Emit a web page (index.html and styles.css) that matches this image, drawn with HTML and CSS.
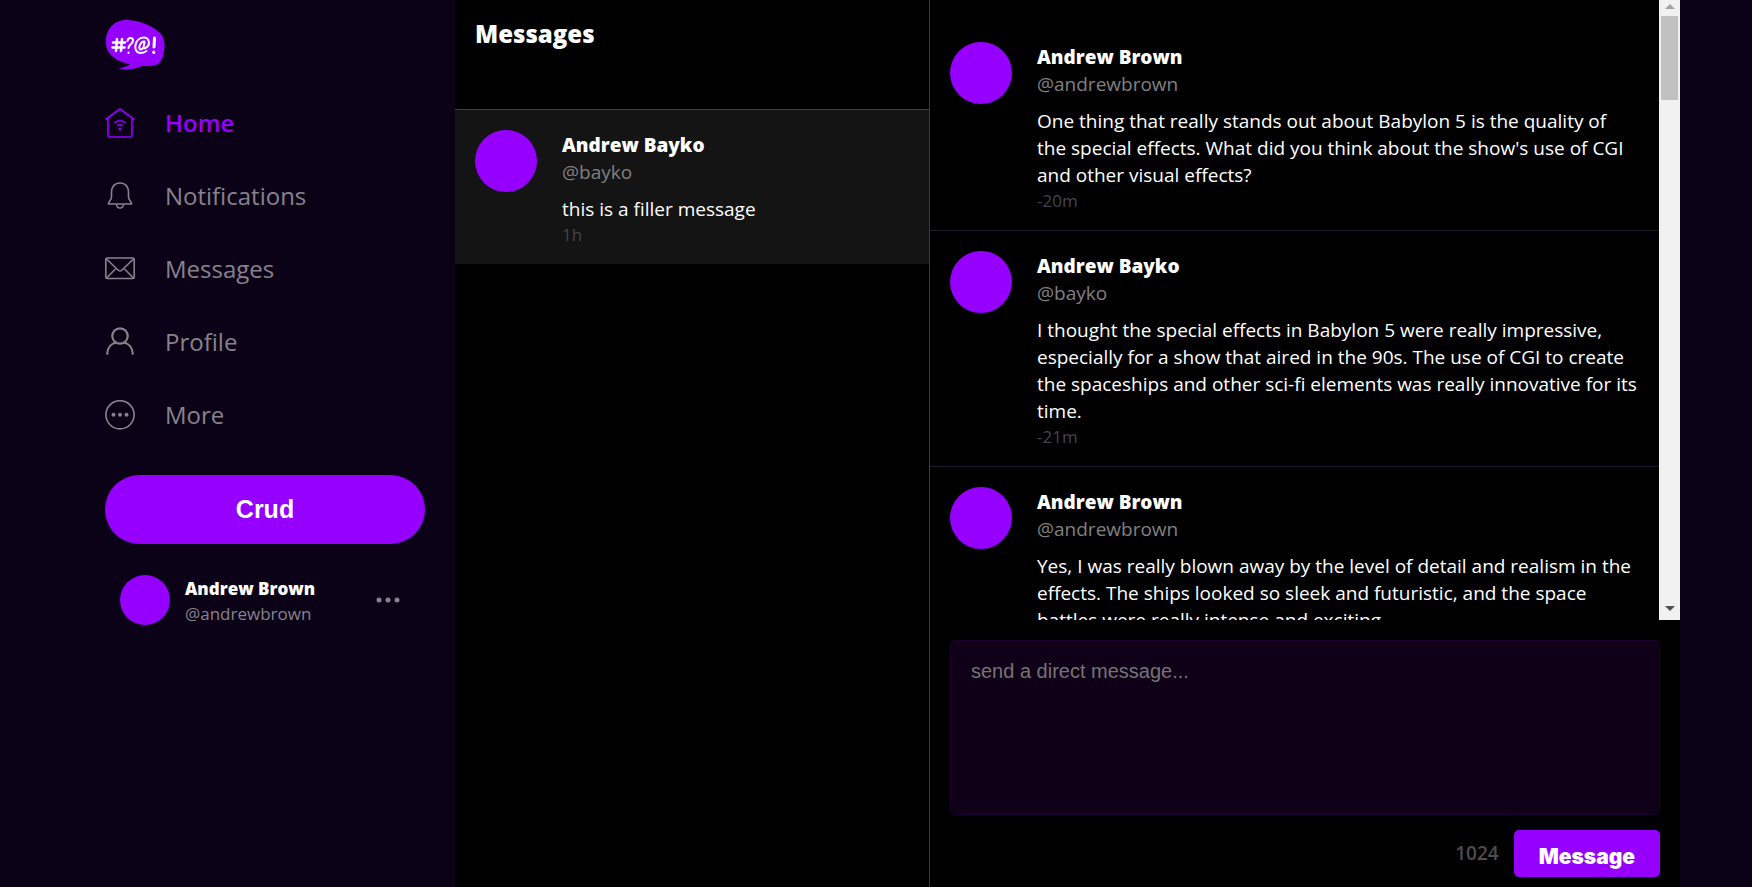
FILE: index.html
```html
<!DOCTYPE html>
<html lang="en">
<head>
<meta charset="utf-8">
<meta name="viewport" content="width=device-width, initial-scale=1">
<title>Messages</title>
<link rel="stylesheet" href="styles.css">
</head>
<body>
<div class="app">
  <nav class="sidebar" aria-label="Main">
    <svg class="logo" viewBox="0 0 60 50" role="img" aria-label="Cruddur">
      <path class="bubble" d="M21 0C34 0 48 6 55 13C61 19 60 28 58 36C56 43 52 46 44 46L37 46C32 49 22 50 13 48.500C19 48 23 46 25 44C12 42 1 34 1 23C0 11 8 0 21 0Z"/>
      <g class="marks">
        <path class="hash" d="M12 19L11 31M17 19L16 31M8 22.500H20M7.500 27.500H19.500"/>
        <path d="M22.500 21C23 17 28.500 17 28 21C27.500 24 24 24 23.500 28M23.500 32.500V33"/>
        <path d="M39.500 21.500C35 21 32.500 30 36 29.500C39 29 39.500 22 39.500 22C38.500 27 38 29 40.500 28C46 25 44.500 17.500 38.500 17.500C29.500 17.500 27 33 35.500 33C38 33 40 32 41.500 31"/>
        <path class="thick" d="M49.500 18L49 27M48.800 32V32.500"/>
      </g>
    </svg>
    <a class="nav-link active" href="#home">
      <svg viewBox="0 0 30 30" aria-hidden="true"><path d="M.7 11.500L15 1L29.300 11.500M3 10.500V27.500Q3 29 4.500 29H25.500Q27 29 27 27.500V10.500"/><path d="M9.500 15Q15 10.500 20.500 15M12 18Q15 15.500 18 18"/><circle class="dot" cx="15" cy="21" r="1.400"/></svg>
      <span>Home</span>
    </a>
    <a class="nav-link" href="#notifications">
      <svg viewBox="0 0 30 30" aria-hidden="true"><path d="M15 2C9.500 2 6.500 6 6.500 11V16C6.500 19 3.500 20.500 3.500 23H26.500C26.500 20.500 23.500 19 23.500 16V11C23.500 6 20.500 2 15 2Z"/><path d="M11.500 23.500Q12 27 15 27T18.500 23.500"/></svg>
      <span>Notifications</span>
    </a>
    <a class="nav-link" href="#messages">
      <svg viewBox="0 0 30 30" aria-hidden="true"><rect x=".8" y="4" width="28.400" height="20.500" rx="1.500"/><path d="M1.500 5L12.500 15.500Q15 18.500 17.500 15.500L28.500 5M1.500 24L10.500 15M28.500 24L19.500 15"/></svg>
      <span>Messages</span>
    </a>
    <a class="nav-link" href="#profile">
      <svg class="bold" viewBox="0 0 30 30" aria-hidden="true"><circle cx="15" cy="9" r="7.700"/><path d="M2.200 26.800C2.500 20.500 6.500 16.500 11 15.500M27.800 26.800C27.500 20.500 23.500 16.500 19 15.500"/></svg>
      <span>Profile</span>
    </a>
    <a class="nav-link" href="#more">
      <svg viewBox="0 0 30 30" aria-hidden="true"><circle cx="15" cy="14.800" r="14.100"/><g class="dot"><circle cx="8.500" cy="14.800" r="2"/><circle cx="15" cy="14.800" r="2"/><circle cx="21.500" cy="14.800" r="2"/></g></svg>
      <span>More</span>
    </a>
    <button class="crud" type="button">Crud</button>
    <button class="account" type="button" aria-label="Account: Andrew Brown">
      <span class="avatar small"></span>
      <span class="account-id">
        <span class="name">Andrew Brown</span>
        <span class="handle">@andrewbrown</span>
      </span>
      <svg class="ellipsis" viewBox="0 0 24 6" aria-hidden="true"><circle cx="3" cy="3" r="2.500"/><circle cx="12" cy="3" r="2.500"/><circle cx="21" cy="3" r="2.500"/></svg>
    </button>
  </nav>

  <section class="groups">
    <header class="groups-head"><h1>Messages</h1></header>
    <a class="item selected" href="#bayko">
      <span class="avatar"></span>
      <span class="item-body">
        <span class="name">Andrew Bayko</span>
        <span class="handle">@bayko</span>
        <span class="text">this is a filler message</span>
        <time>1h</time>
      </span>
    </a>
  </section>

  <main class="conversation">
    <div class="feed" tabindex="0" aria-label="Conversation">
      <article class="item">
        <span class="avatar"></span>
        <div class="item-body">
          <span class="name">Andrew Brown</span>
          <span class="handle">@andrewbrown</span>
          <p class="text">One thing that really stands out about Babylon 5 is the quality of the special effects. What did you think about the show's use of CGI and other visual effects?</p>
          <time>-20m</time>
        </div>
      </article>
      <article class="item">
        <span class="avatar"></span>
        <div class="item-body">
          <span class="name">Andrew Bayko</span>
          <span class="handle">@bayko</span>
          <p class="text">I thought the special effects in Babylon 5 were really impressive, especially for a show that aired in the 90s. The use of CGI to create the spaceships and other sci-fi elements was really innovative for its time.</p>
          <time>-21m</time>
        </div>
      </article>
      <article class="item">
        <span class="avatar"></span>
        <div class="item-body">
          <span class="name">Andrew Brown</span>
          <span class="handle">@andrewbrown</span>
          <p class="text">Yes, I was really blown away by the level of detail and realism in the effects. The ships looked so sleek and futuristic, and the space battles were really intense and exciting.</p>
        </div>
      </article>
    </div>
    <div class="scrollbar" aria-hidden="true">
      <span class="arrow up"></span>
      <span class="thumb"></span>
      <span class="arrow down"></span>
    </div>
    <form class="composer">
      <textarea aria-label="Direct message" placeholder="send a direct message..."></textarea>
      <div class="submit">
        <span class="count">1024</span>
        <button type="button">Message</button>
      </div>
    </form>
  </main>
</div>
</body>
</html>
```
FILE: styles.css
```css
* { box-sizing: border-box; }

:root {
  --purple: #9500ff;
  --line: #3a3a4a;
}

body {
  margin: 0;
  background: #0c0218;
  color: #fff;
  font-family: "Open Sans", sans-serif;
  font-size: 19px;
  line-height: 27px;
}

a { color: inherit; text-decoration: none; }
h1, p { margin: 0; }

.app {
  display: grid;
  grid-template-columns: 383px minmax(0, 475fr) minmax(0, 750fr);
  grid-template-rows: minmax(0, 1fr);
  max-width: 1608px;
  height: 100vh;
  margin: 0 auto;
}

.sidebar {
  display: flex;
  flex-direction: column;
  align-items: stretch;
  padding: 20px 30px 0 33px;
}

.logo { width: 60px; height: 50px; margin-bottom: 16px; }
.bubble { fill: var(--purple); }
.marks { fill: none; stroke: #fff; stroke-width: 2; stroke-linecap: round; }
.hash { stroke-width: 2.5; }
.thick { stroke-width: 3; }

.nav-link {
  display: flex;
  align-items: center;
  gap: 30px;
  height: 73px;
  color: #88828c;
  font-size: 24px;
}

.nav-link svg { width: 30px; height: 30px; fill: none; stroke: currentColor; stroke-width: 1.6; stroke-linejoin: round; }
.nav-link svg.bold { stroke-width: 2.2; stroke-linecap: round; }
.nav-link .dot { fill: currentColor; stroke: none; }
.nav-link.active { color: var(--purple); font-weight: 600; }

.crud {
  height: 69px;
  margin-top: 24px;
  border: 0;
  border-radius: 35px;
  background: var(--purple);
  color: #fff;
  font: bold 25px "Liberation Sans", Arial, sans-serif;
}

.account {
  display: flex;
  align-items: center;
  gap: 15px;
  margin-top: 30px;
  padding: 0 25px 0 15px;
  border: 0;
  background: none;
  font: inherit;
  text-align: left;
}

.account-id { display: flex; flex: 1; flex-direction: column; padding-top: 2px; font-size: 17px; line-height: 25px; }
.account .name { font-size: 17px; }
.account .handle { color: #88828c; }
.ellipsis { width: 24px; height: 6px; fill: #88828c; }

.avatar { flex: none; width: 62px; height: 62px; border-radius: 50%; background: var(--purple); }
.avatar.small { width: 50px; height: 50px; }

.name { color: #fff; font-weight: 800; font-size: 19px; }
.handle { color: #808080; }

.groups { border-right: 1px solid var(--line); background: #000; }
.groups-head { height: 110px; padding: 20px; border-bottom: 1px solid var(--line); }
.groups-head h1 { font-size: 24px; font-weight: 800; line-height: 27px; }

.item { display: flex; gap: 25px; padding: 20px 20px 18px; }
.item.selected { background: #141414; }
.item-body { display: flex; flex: 1; flex-direction: column; padding-top: 2px; }
.item .text { margin-top: 10px; }
.item time { color: #424551; font-size: 17px; line-height: 23px; }

.conversation {
  display: grid;
  grid-template-columns: minmax(0, 1fr) 21px;
  grid-template-rows: minmax(0, 1fr) auto;
  background: #000;
}

.feed { overflow: hidden; padding-top: 22px; }
.feed .item { border-bottom: 1px solid #1c1c30; }

.scrollbar {
  display: flex;
  flex-direction: column;
  align-items: center;
  padding: 4px 0 9px;
  background: #f1f1f1;
}

.arrow { border: 5px solid transparent; }
.arrow.up { border-top: 0; border-bottom-color: #a3a3a3; }
.arrow.down { margin-top: auto; border-bottom: 0; border-top-color: #505050; }
.thumb { width: 17px; height: 84px; margin-top: 7px; background: #c1c1c1; }

.composer { grid-column: 1 / -1; padding: 20px 20px 10px; }

.composer textarea {
  display: block;
  width: 100%;
  height: 175px;
  padding: 19px 20px;
  border: 1px solid #1c0030;
  border-radius: 5px;
  background: #0f0018;
  color: #fff;
  font: 20px "Liberation Sans", Arial, sans-serif;
  resize: none;
}

.composer textarea::placeholder { color: #757575; }

.submit { display: flex; align-items: center; justify-content: flex-end; gap: 15px; margin-top: 15px; }
.count { color: #4d4d4d; font-weight: 600; }

.submit button {
  height: 47px;
  padding: 5px 25px 0;
  border: 0;
  border-radius: 5px;
  background: var(--purple);
  color: #fff;
  font: 900 21px Inter, sans-serif;
}
```
